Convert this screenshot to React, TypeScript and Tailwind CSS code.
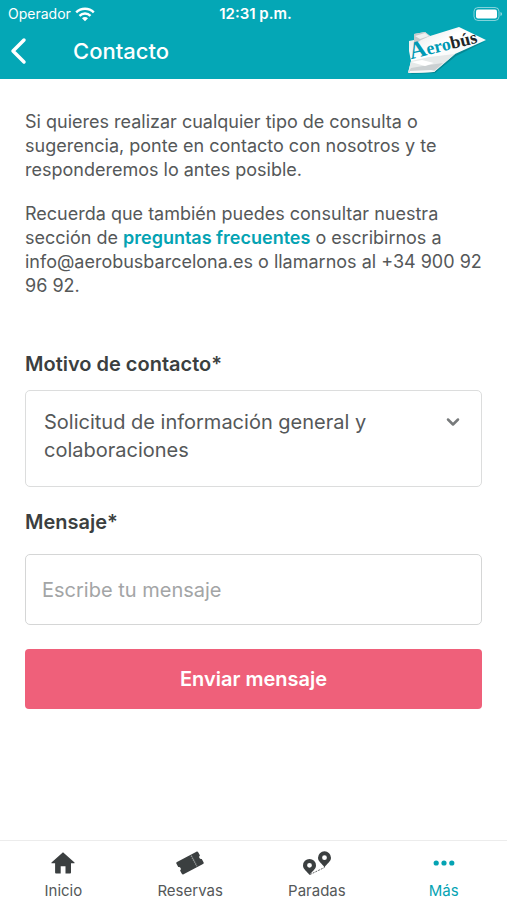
import type { ReactNode } from "react";
import { ChevronDown } from "lucide-react";

function WifiIcon() {
  return (
    <svg viewBox="0 0 20 15" className="h-[15px] w-5" fill="none" stroke="white" strokeWidth="2.4" aria-hidden="true">
      <path d="M1.2 5.4C6 .6 14 .6 18.8 5.4" />
      <path d="M4.5 8.8c3-3 8-3 11 0" />
      <path d="M10 14.2 7 11.2c1.7-1.5 4.3-1.5 6 0z" fill="white" stroke="none" />
    </svg>
  );
}

function BatteryIcon() {
  return (
    <svg viewBox="0 0 30 14" className="h-[14px] w-[30px]" aria-hidden="true">
      <rect x="1" y=".5" width="25" height="13" rx="4" fill="none" stroke="white" strokeOpacity=".5" />
      <rect x="3" y="2.5" width="21" height="9" rx="2" fill="white" />
      <path d="M27.5 5v4c2-.8 2-3.2 0-4z" fill="white" fillOpacity=".6" />
    </svg>
  );
}

function Logo() {
  return (
    <svg viewBox="0 0 82 50" className="h-[50px] w-[82px]" role="img" aria-label="Aerobús">
      <defs>
        <linearGradient id="paper" x1="0" y1="0" x2="1" y2="1">
          <stop offset="0" stopColor="#dfe2e3" />
          <stop offset=".4" stopColor="#ffffff" />
          <stop offset="1" stopColor="#eceeee" />
        </linearGradient>
      </defs>
      <path d="m5 48 25-1 21-17 30-15-30 10z" fill="#07616b" fillOpacity=".45" />
      <path d="m4 15 5-1V8l11-2 5 4 29-9 27 13-31 14-21 18-26 1 3-12-2-10z" fill="url(#paper)" />
      <path d="M9 8l11-2 5 4-9 4-7 5z" fill="#c4cacc" />
      <path d="m10 10 10-3 4 3-9 3z" fill="#eef0f0" />
      <path d="m6 35 18-4 26-3-21 18-26 1z" fill="#e6e9e9" />
      <path d="m3 47 3-5 18-3 14-2-9 8z" fill="#cbd0d2" />
      <path d="m6 36 11-2 12 3-9 3z" fill="#ffffff" />
      <path d="m5 45 21-1 4 1-2 1-24 1z" fill="#f7f8f8" />
      <g transform="rotate(-14 7 33)">
        <text x="6" y="33" fontFamily="'Liberation Serif', serif" fontWeight="700" fontSize="18" fill="#0099b4">
          <tspan fontSize="24">A</tspan>ero<tspan fill="#202427">bús</tspan>
        </text>
      </g>
    </svg>
  );
}

function HomeIcon() {
  return (
    <svg viewBox="0 0 24 24" className="size-6" fill="#3b3f40" aria-hidden="true">
      <path d="M12 1.2 23.5 11.5c.3.4.1.7-.3.7H20v9.3c0 .6-.3.9-.9.9h-4.600v-7.200H9.700v7.200H5c-.6 0-.9-.3-.9-.9v-9.300H.8c-.4 0-.6-.3-.3-.7z" />
    </svg>
  );
}

function TicketIcon() {
  return (
    <svg viewBox="0 0 28 24" className="h-6 w-7" aria-hidden="true">
      <g transform="rotate(-28 14 12)">
        <path
          d="M3 5h22c.8 0 1.300.5 1.300 1.300v3.800c-1.100.2-1.600.9-1.600 1.900s.5 1.700 1.600 1.900v3.800c0 .8-.5 1.300-1.300 1.300H3c-.8 0-1.300-.5-1.300-1.300v-3.800c1.100-.2 1.600-.9 1.600-1.900s-.5-1.700-1.600-1.900V6.300C1.700 5.500 2.200 5 3 5z"
          fill="#3b3f40"
        />
        <path d="M18.500 6v12" stroke="#8f9393" strokeWidth="1.500" strokeDasharray="1.500 .7" />
      </g>
    </svg>
  );
}

function StopsIcon() {
  return (
    <svg viewBox="0 0 30 26" className="h-[26px] w-[30px]" aria-hidden="true">
      <path
        fill="#3b3f40"
        fillRule="evenodd"
        d="M7.500 8.900a6.500 6.500 0 0 0-6.500 6.500c0 4 4.400 6 6.500 9.600 2.100-3.600 6.500-5.600 6.500-9.600a6.500 6.500 0 0 0-6.500-6.500zm0 4a2.400 2.400 0 1 1 0 4.800 2.400 2.400 0 0 1 0-4.800zM22.500 1.300a6.500 6.500 0 0 0-6.500 6.500c0 4 4.400 6 6.500 9.600 2.100-3.600 6.500-5.600 6.500-9.600a6.500 6.500 0 0 0-6.500-6.500zm0 4a2.400 2.400 0 1 1 0 4.800 2.400 2.400 0 0 1 0-4.800z"
      />
      <path d="m8 24.500 14.500-7" stroke="#3b3f40" strokeWidth=".8" strokeDasharray="2 1" />
    </svg>
  );
}

function MoreIcon() {
  return (
    <svg viewBox="0 0 22 6" className="h-[6px] w-[22px]" fill="#04a3b3" aria-hidden="true">
      <circle cx="3.2" cy="3" r="2.6" />
      <circle cx="11" cy="3" r="2.6" />
      <circle cx="18.8" cy="3" r="2.6" />
    </svg>
  );
}

function Tab({ label, icon, active = false }: { label: string; icon: ReactNode; active?: boolean }) {
  return (
    <a
      href="#"
      aria-current={active ? "page" : undefined}
      className={`flex flex-1 flex-col items-center pt-2 text-[15px] leading-4 ${active ? "text-[#04a3b3]" : "text-[#555859]"}`}
    >
      <span className="mb-1.5 flex h-7 shrink-0 items-center">{icon}</span>
      {label}
    </a>
  );
}

export default function App() {
  return (
    <div className="flex min-h-screen flex-col bg-white font-['Inter','Liberation_Sans',sans-serif] text-[#555859]">
      <header className="bg-[#04a7b6] pb-[3px] text-white">
        <div className="grid grid-cols-3 items-center pt-1 pr-1 pl-2 leading-5">
          <div className="flex items-center gap-1 text-sm">
            Operador <WifiIcon />
          </div>
          <time className="text-center text-[15px] font-semibold">12:31 p.m.</time>
          <div className="flex justify-end">
            <BatteryIcon />
          </div>
        </div>
        <div className="flex items-center pt-0.5 pr-5 pl-2">
          <button type="button" aria-label="Volver" className="flex w-[65px] items-center">
            <svg viewBox="0 0 20 28" className="h-7 w-5" fill="none" stroke="white" strokeWidth="3.5" strokeLinecap="round" strokeLinejoin="round">
              <path d="M16 3 5 14l11 11" />
            </svg>
          </button>
          <h1 className="flex-1 text-[22px] leading-7 font-medium">Contacto</h1>
          <Logo />
        </div>
      </header>

      <main className="flex-1 px-[25px] pt-[31px] pb-8">
        <div className="-mr-1 flex flex-col gap-5 text-lg leading-6">
          <p>
            Si quieres realizar cualquier tipo de consulta o sugerencia, ponte en contacto con nosotros y te responderemos
            lo antes posible.
          </p>
          <p>
            Recuerda que también puedes consultar nuestra sección de{" "}
            <a href="#" className="font-semibold text-[#04a3b3]">
              preguntas frecuentes
            </a>{" "}
            o escribirnos a info@aerobusbarcelona.es o llamarnos al +34 900 92 96 92.
          </p>
        </div>

        <form className="mt-[52px] flex flex-col" onSubmit={(e) => e.preventDefault()}>
          <label htmlFor="motivo" className="text-xl leading-7 font-semibold text-[#3b3f40]">
            Motivo de contacto*
          </label>
          <div className="relative mt-3">
            <select
              id="motivo"
              className="block h-[97px] w-full appearance-none rounded-[5px] border border-[#dcdddd] bg-white pt-[17px] pr-20 pb-6 pl-[18px] text-xl leading-7 whitespace-normal"
            >
              <option>Solicitud de información general y colaboraciones</option>
            </select>
            <ChevronDown className="pointer-events-none absolute top-[22px] right-[19px] size-5 text-[#777a7b]" strokeWidth={3} />
          </div>
          <label htmlFor="mensaje" className="mt-[21px] text-xl leading-7 font-semibold text-[#3b3f40]">
            Mensaje*
          </label>
          <input
            id="mensaje"
            type="text"
            placeholder="Escribe tu mensaje"
            className="mt-[18px] h-[71px] rounded-[5px] border border-[#d5d6d6] px-4 text-xl placeholder:text-[#a3a5a6]"
          />
          <button type="submit" className="mt-6 h-[60px] rounded bg-[#ef607a] text-xl font-semibold text-white">
            Enviar mensaje
          </button>
        </form>
      </main>

      <nav className="flex h-[60px] border-t border-[#ececec]">
        <Tab label="Inicio" icon={<HomeIcon />} />
        <Tab label="Reservas" icon={<TicketIcon />} />
        <Tab label="Paradas" icon={<StopsIcon />} />
        <Tab label="Más" icon={<MoreIcon />} active />
      </nav>
    </div>
  );
}
